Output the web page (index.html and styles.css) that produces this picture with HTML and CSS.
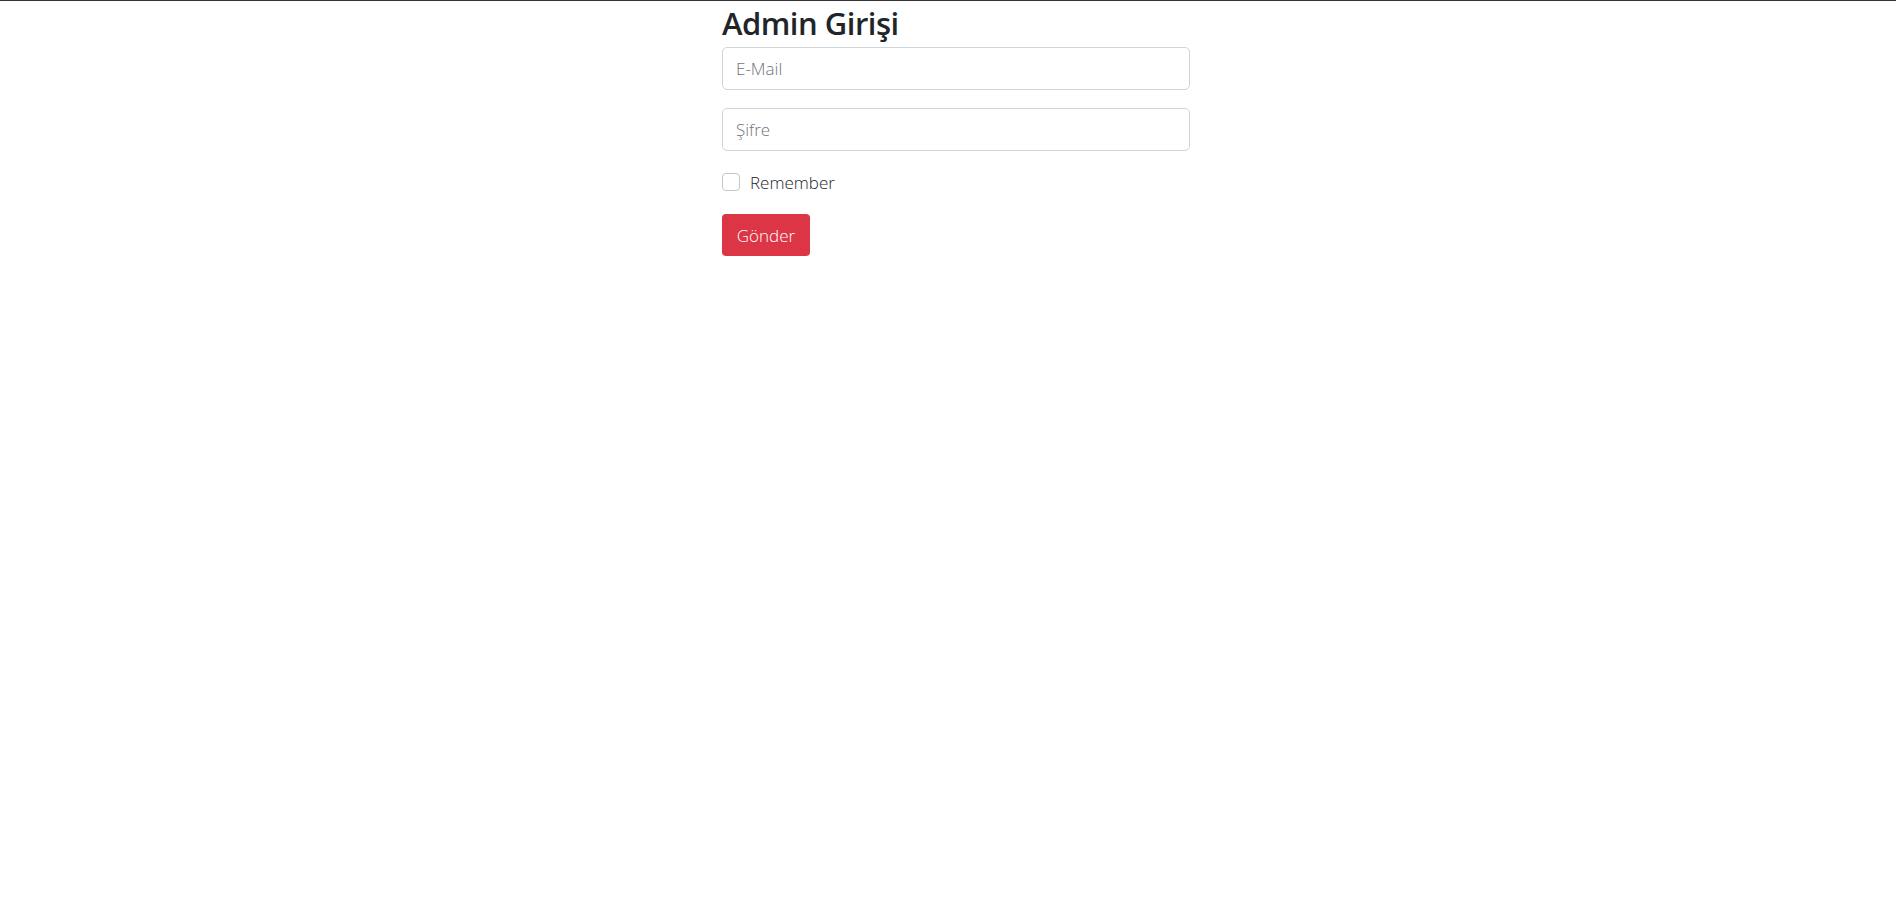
FILE: index.html
```html
<!DOCTYPE html>
<html lang="tr">
<head>
<meta charset="utf-8">
<title>Admin Girişi</title>
<link rel="stylesheet" href="styles.css">
</head>
<body>
<div class="page">
  <form class="login">
    <h2 class="title">Admin Girişi</h2>
    <input class="field" type="email" placeholder="E-Mail">
    <input class="field" type="password" placeholder="Şifre">
    <label class="check">
      <span class="box"></span>
      <span class="check-label">Remember</span>
    </label>
    <button class="btn" type="button">Gönder</button>
  </form>
</div>
</body>
</html>
```

FILE: styles.css
```css
html, body {
  margin: 0;
  padding: 0;
  background: #fff;
}
body {
  border-top: 1px solid #333;
  font-family: "Open Sans", "Liberation Sans", sans-serif;
  color: #212529;
}
.page {
  padding-left: 722px;
}
.login {
  width: 468px;
  display: flex;
  flex-direction: column;
  align-items: flex-start;
}
.title {
  margin: 0;
  font-size: 31px;
  font-weight: 600;
  line-height: 44px;
  height: 46px;
  letter-spacing: -0.5px;
}
.field {
  box-sizing: border-box;
  width: 468px;
  height: 43px;
  margin: 0 0 18px 0;
  padding: 6px 13px;
  border: 1px solid #ced4da;
  border-radius: 5px;
  font-family: inherit;
  font-weight: 300;
  font-size: 17px;
  color: #212529;
  outline: none;
}
.field::placeholder {
  color: #6c757d;
}
.check {
  display: flex;
  align-items: center;
  gap: 10px;
  height: 26px;
  margin: 0 0 19px 0;
}
.box {
  box-sizing: border-box;
  width: 18px;
  height: 18px;
  border: 1px solid #c4c6c8;
  border-radius: 4px;
}
.check-label {
  font-size: 17px;
  font-weight: 300;
  color: #212529;
}
.btn {
  box-sizing: border-box;
  width: 88px;
  height: 42px;
  padding: 0;
  border: none;
  border-radius: 4px;
  background: #dc3545;
  color: #fff;
  font-family: inherit;
  font-weight: 300;
  font-size: 17px;
}
```
